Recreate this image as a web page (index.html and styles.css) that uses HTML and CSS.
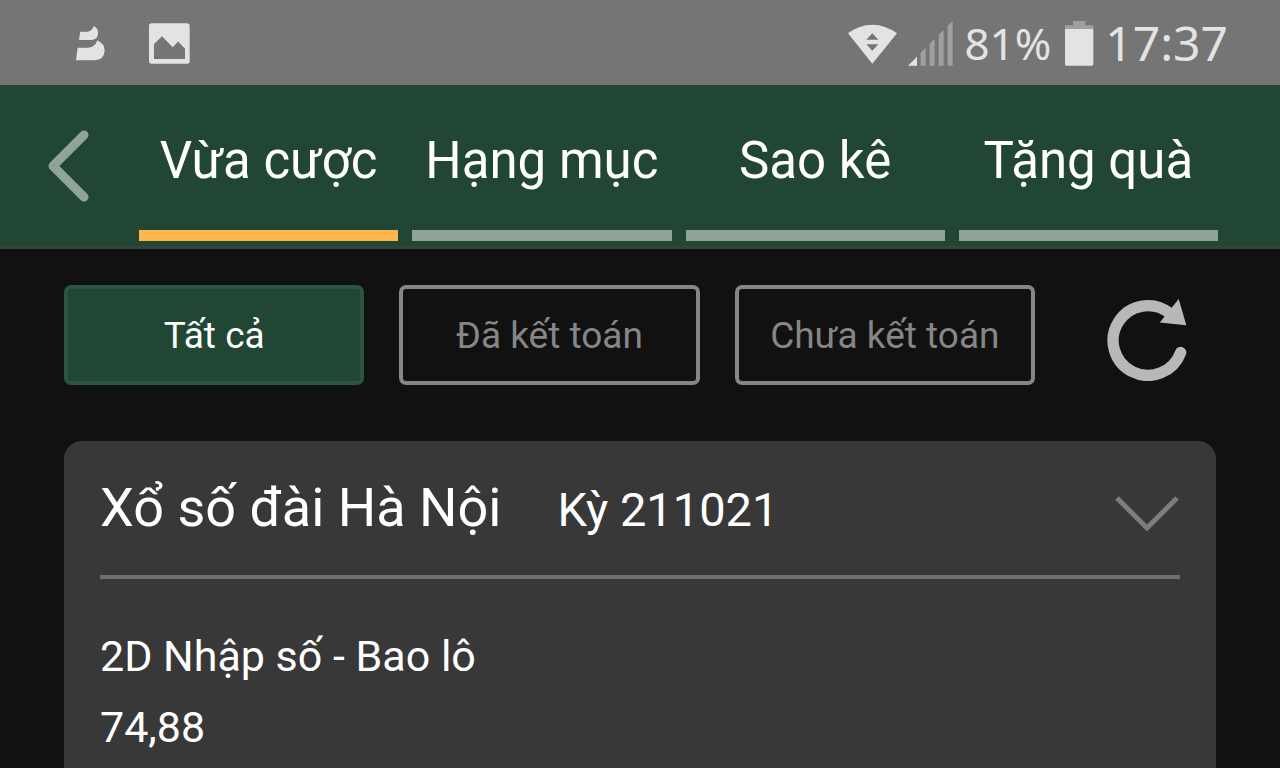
FILE: index.html
```
<!DOCTYPE html>
<html lang="vi">
<head>
    <meta charset="UTF-8">
    <meta name="viewport" content="width=device-width, initial-scale=1.0">
    <title>Vừa cược</title>
    <link rel="stylesheet" href="styles.css">
</head>
<body>
    <div class="status-bar">
        <div class="status-left">
            <svg width="29" height="35" viewBox="48 48 88 106">
                <path d="M61 65H83Q98 64 101 49Q114 53 115 67Q115 90 96 90H57Z"/>
                <path d="M53 114H84Q109 111 112 91Q135 101 135 123Q133 151 104 152H48Z"/>
            </svg>
            <svg width="41" height="41" viewBox="267 38 124 124">
                <path fill-rule="evenodd" d="M275 39H382Q390 39 390 47V153Q390 161 382 161H275Q267 161 267 153V47Q267 39 275 39ZM282 147H376V116L355 94L339 111L306 78L282 102Z"/>
            </svg>
        </div>
        <div class="status-right">
            <svg class="wifi" width="49" height="40" viewBox="28 40 147 120">
                <path fill-rule="evenodd" d="M28 68Q62 42 101 42Q140 42 175 68L101 159ZM83 87H119L101 68ZM83 101H119L101 120Z"/>
            </svg>
            <svg class="signal" width="45" height="45" viewBox="205 34 135 135">
                <path d="M205 168L232 141V168Z"/>
                <path class="dim" d="M243 129L258 114V168H243ZM270 102L285 87V168H270ZM297 75L312 61V168H297ZM324 48L339 34V168H324Z"/>
            </svg>
            <span class="battery-level">81%</span>
            <svg class="battery" width="29" height="45" viewBox="75 33 87 135">
                <path class="dim" d="M99 33H136V46H160V57H75V46H99Z"/>
                <path d="M75 57H160V162Q160 167 155 167H80Q75 167 75 162Z"/>
            </svg>
            <span class="clock">17:37</span>
        </div>
    </div>

    <header class="header">
        <button class="back" type="button" aria-label="Quay lại">
            <svg width="41" height="72" viewBox="0 0 41 72">
                <path d="M36 5L5 36L36 67"/>
            </svg>
        </button>
        <nav class="tabs">
            <a href="#recent" class="tab active">Vừa cược</a>
            <a href="#category" class="tab">Hạng mục</a>
            <a href="#statement" class="tab">Sao kê</a>
            <a href="#gift" class="tab">Tặng quà</a>
        </nav>
    </header>

    <main class="content">
        <div class="filters">
            <button class="filter selected" type="button">Tất cả</button>
            <button class="filter" type="button">Đã kết toán</button>
            <button class="filter" type="button">Chưa kết toán</button>
            <button class="reload" type="button" aria-label="Tải lại">
                <svg width="81" height="83" viewBox="1158 84 244 248">
                    <path class="ring" d="M1350 129A105 105 0 1 0 1383 247"/>
                    <path class="arrow" d="M1377 86L1400 165L1320 157Z"/>
                </svg>
            </button>
        </div>

        <section class="card">
            <div class="card-header">
                <h1>Xổ số đài Hà Nội</h1>
                <span class="period">Kỳ 211021</span>
                <button class="toggle" type="button" aria-label="Mở rộng">
                    <svg width="64" height="36" viewBox="0 0 64 36">
                        <path d="M2 2L32 32L62 2"/>
                    </svg>
                </button>
            </div>
            <div class="card-body">
                <p>2D Nhập số - Bao lô</p>
                <p>74,88</p>
            </div>
        </section>
    </main>
</body>
</html>
```
FILE: styles.css
```
* {
    margin: 0;
    padding: 0;
    box-sizing: border-box;
}

:root {
    --green: #214634;
    --green-light: #8fa497;
    --accent: #ffb74d;
    --dark: #111111;
    --card: #383838;
    --gray: #868686;
    --status: #e3e3e3;
}

body {
    display: flex;
    flex-direction: column;
    min-height: 100vh;
    background: var(--dark);
    color: #fff;
    font-family: Roboto, "Noto Sans", sans-serif;
}

button {
    background: none;
    border: none;
    font: inherit;
    cursor: pointer;
}

svg {
    display: block;
    flex: none;
}

/* Status bar */
.status-bar {
    display: flex;
    justify-content: space-between;
    align-items: center;
    height: 85px;
    padding: 2px 52px 0 76px;
    background: #757575;
    color: var(--status);
    font-family: "Noto Sans", sans-serif;
}

.status-bar svg {
    fill: var(--status);
}

.status-bar .dim {
    fill: #a0a0a0;
}

.status-left,
.status-right {
    display: flex;
    align-items: center;
}

.status-left {
    gap: 44px;
}

.status-right {
    gap: 11px;
}

.status-right span {
    padding-bottom: 2px;
}

.battery-level {
    padding-right: 3px;
    font-size: 44px;
}

.clock {
    font-size: 48px;
}

/* Header */
.header {
    display: flex;
    gap: 50px;
    height: 164px;
    padding: 0 62px 5px 48px;
    background: var(--green);
    border-bottom: 3px solid #38423d;
}

.back {
    padding-top: 6px;
}

.back path {
    fill: none;
    stroke: var(--green-light);
    stroke-width: 9;
    stroke-linecap: round;
    stroke-linejoin: round;
}

.tabs {
    display: grid;
    grid-template-columns: repeat(4, 1fr);
    gap: 14px;
    flex: 1;
}

.tab {
    display: flex;
    align-items: center;
    justify-content: center;
    padding-top: 6px;
    border-bottom: 11px solid var(--green-light);
    color: #fff;
    font-size: 51px;
    text-decoration: none;
    white-space: nowrap;
}

.tab.active {
    border-color: var(--accent);
}

/* Filters */
.content {
    display: flex;
    flex-direction: column;
    flex: 1;
    gap: 56px;
    padding: 36px 64px 0;
}

.filters {
    display: grid;
    grid-template-columns: repeat(3, 1fr) 146px;
    gap: 35px;
}

.filter {
    height: 100px;
    border: 4px solid var(--gray);
    border-radius: 7px;
    color: var(--gray);
    font-size: 37px;
    white-space: nowrap;
}

.filter.selected {
    background: var(--green);
    border-color: #2c543f;
    color: #fff;
}

.reload {
    display: flex;
    align-items: center;
    justify-content: center;
    padding: 8px 0 0 6px;
}

.reload .ring {
    fill: none;
    stroke: #b8b8b8;
    stroke-width: 34;
    stroke-linecap: round;
}

.reload .arrow {
    fill: #b8b8b8;
}

/* Bet card */
.card {
    flex: 1;
    padding: 0 36px;
    background: var(--card);
    border-radius: 18px 18px 0 0;
}

.card-header {
    display: flex;
    align-items: baseline;
    gap: 56px;
    height: 138px;
    padding-top: 35px;
    border-bottom: 4px solid #707070;
}

.card-header h1 {
    font-size: 54px;
    font-weight: 400;
    line-height: 64px;
}

.period {
    font-size: 47px;
}

.toggle {
    align-self: flex-start;
    margin-left: auto;
    padding: 20px 1px 0 0;
}

.toggle path {
    fill: none;
    stroke: #7c7c7c;
    stroke-width: 5;
}

.card-body {
    padding-top: 42px;
    font-size: 43px;
    line-height: 71px;
}
```
